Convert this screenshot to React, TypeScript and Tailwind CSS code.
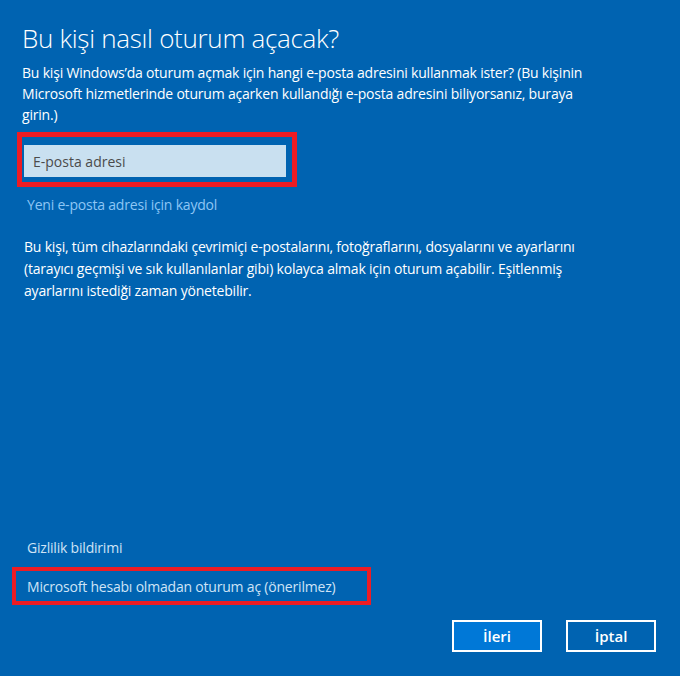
import React from "react";

const App = () => {
  const [email, setEmail] = React.useState("");

  return (
    <div
      className="w-[680px] h-[676px] bg-[#0063b1] text-white flex flex-col overflow-hidden"
      style={{ fontFamily: '"Open Sans", "Noto Sans", sans-serif' }}
    >
      <div className="px-[22px] pt-[20px]">
        <h1 className="text-[26px] leading-[36px] font-light tracking-[-0.3px]">
          Bu kişi nasıl oturum açacak?
        </h1>
        <p className="mt-[6px] w-[600px] text-[14px] leading-[21px] tracking-[-0.2px]">
          Bu kişi Windows’da oturum açmak için hangi e-posta adresini kullanmak
          ister? (Bu kişinin Microsoft hizmetlerinde oturum açarken kullandığı
          e-posta adresini biliyorsanız, buraya
          <br />
          girin.)
        </p>
      </div>

      <div className="ml-[17px] mt-[7px] w-[280px] border-[5px] border-[#ed1c24] pt-[8px] pb-[5px] pl-[2px] pr-[6px]">
        <input
          value={email}
          onChange={(e) => setEmail(e.target.value)}
          placeholder="E-posta adresi"
          className="w-full h-[32px] bg-[#c9e0f0] px-[9px] text-[14px] text-[#333] placeholder:text-[#4b4b4b] outline-none"
        />
      </div>

      <a className="ml-[27px] mt-[7px] text-[14px] leading-[21px] text-[#8ec6f5] tracking-[-0.2px] w-fit">
        Yeni e-posta adresi için kaydol
      </a>

      <p className="ml-[24px] mt-[21px] w-[600px] text-[14px] leading-[22px] tracking-[-0.2px]">
        Bu kişi, tüm cihazlarındaki çevrimiçi e-postalarını, fotoğraflarını,
        dosyalarını ve ayarlarını (tarayıcı geçmişi ve sık kullanılanlar gibi)
        kolayca almak için oturum açabilir. Eşitlenmiş ayarlarını istediği zaman
        yönetebilir.
      </p>

      <div className="flex-1" />

      <a className="ml-[27px] text-[14px] leading-[21px] text-[#cfe3f6] tracking-[-0.2px] w-fit">
        Gizlilik bildirimi
      </a>

      <div className="ml-[12px] mt-[9px] w-[359px] h-[38px] border-[4px] border-[#ed1c24] flex items-center pl-[11px]">
        <a className="text-[14px] text-[#cfe3f6] tracking-[-0.2px]">
          Microsoft hesabı olmadan oturum aç (önerilmez)
        </a>
      </div>

      <div className="flex justify-end gap-[24px] pr-[24px] mt-[15px] mb-[24px]">
        <button className="w-[90px] h-[32px] border-2 border-white bg-[#0078d7] text-[15px] font-semibold">
          İleri
        </button>
        <button className="w-[90px] h-[32px] border-2 border-white bg-transparent text-[15px] font-semibold">
          İptal
        </button>
      </div>
    </div>
  );
};

export default App;
